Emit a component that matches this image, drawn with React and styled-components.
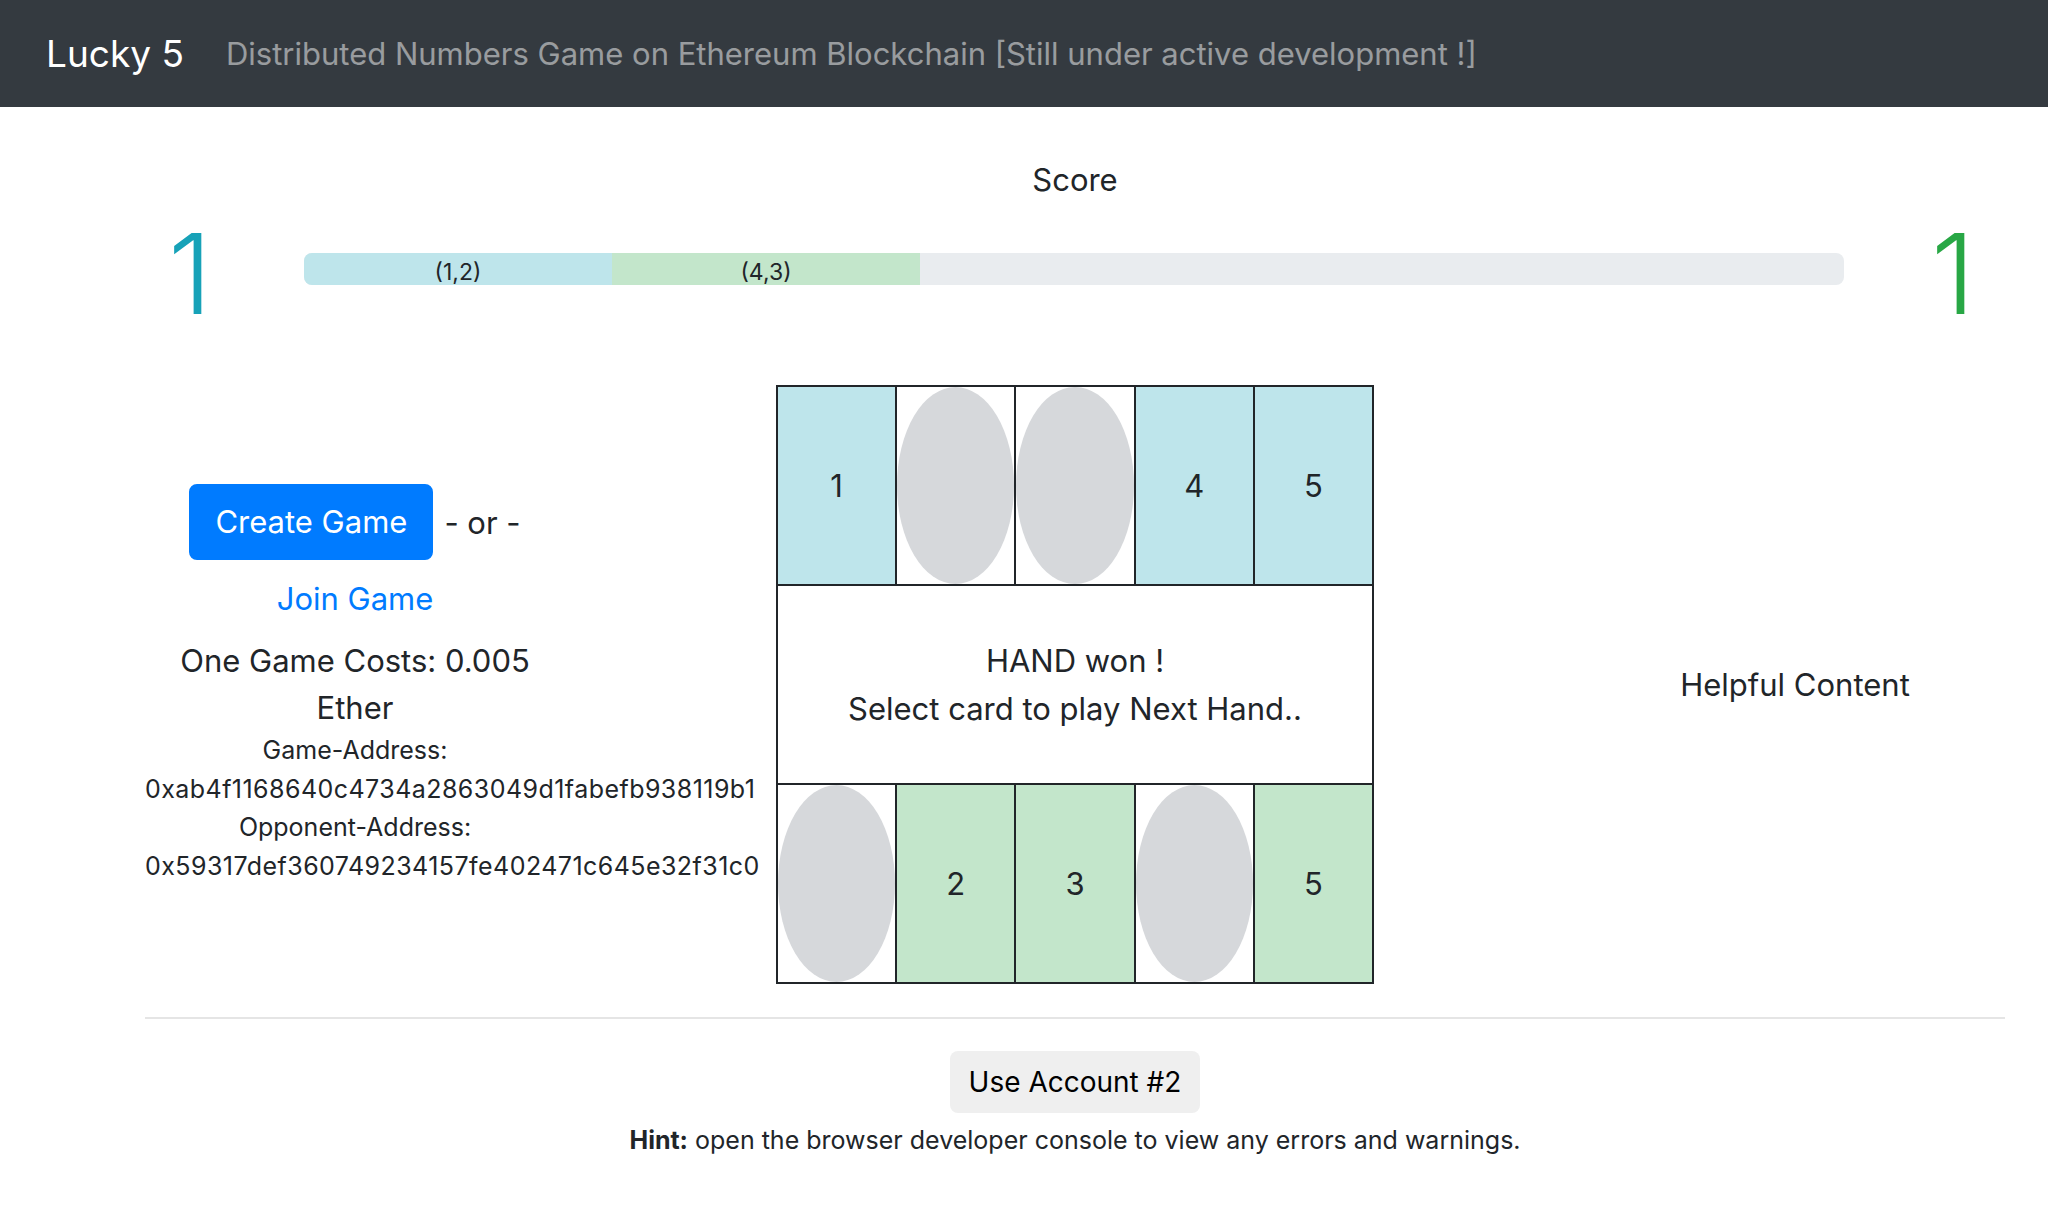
import React from "react";
import styled, {createGlobalStyle} from "styled-components";

const GlobalStyle = createGlobalStyle`
    body {
        margin: 0;
        font-family: Inter, "Noto Sans", "Liberation Sans", sans-serif;
        color: #212529;
        background: #fff;
    }
`

const NavBar = styled.nav`
    height: 107px;
    background-color: #343a40;
    display: flex;
    align-items: center;
    padding: 0 46px;
    gap: 42px;
`

const Brand = styled.span`
    font-size: 37px;
    color: #fff;
    white-space: nowrap;
`

const Tagline = styled.span`
    font-size: 31px;
    color: rgba(255, 255, 255, 0.5);
    white-space: nowrap;
`

const Main = styled.main`
    margin: 0 43px 0 145px;
`

const ScoreTitle = styled.div`
    margin-top: 49px;
    font-size: 31px;
    line-height: 48px;
    text-align: center;
`

const ScoreRow = styled.div`
    display: flex;
    align-items: flex-start;
    margin-top: 2px;
`

const BigScore = styled.div`
    width: ${props => props.$right ? "161px" : "159px"};
    box-sizing: border-box;
    font-size: 112px;
    font-weight: 300;
    line-height: 134px;
    text-align: ${props => props.$right ? "right" : "left"};
    padding: ${props => props.$right ? "0 30px 0 0" : "0 0 0 23px"};
    color: ${props => props.$right ? "#28a745" : "#17a2b8"};
`

const Progress = styled.div`
    flex: 1;
    display: flex;
    height: 32px;
    margin-top: 47px;
    border-radius: 8px;
    overflow: hidden;
    background-color: #e9ecef;
`

const ProgressSegment = styled.div`
    width: 20%;
    font-size: 23px;
    line-height: 32px;
    padding-top: 3px;
    box-sizing: border-box;
    text-align: center;
    background-color: ${props => props.$player ? "#c3e6cb" : "#bee5eb"};
`

const GameRow = styled.div`
    display: grid;
    grid-template-columns: 420px 1fr 420px;
    align-items: center;
    margin-top: 45px;
`

const SideColumn = styled.div`
    display: flex;
    flex-direction: column;
    text-align: center;
`

const ButtonLine = styled.div`
    display: flex;
    justify-content: center;
    align-items: center;
    gap: 11px;
    font-size: 31px;
`

const CreateButton = styled.button`
    font-family: inherit;
    font-size: 31px;
    line-height: 48px;
    padding: 12px 24px;
    color: #fff;
    background-color: #007bff;
    border: 2px solid #007bff;
    border-radius: 8px;
    cursor: pointer;
`

const JoinLink = styled.a`
    display: block;
    margin-top: 15px;
    font-size: 31px;
    line-height: 48px;
    color: #007bff;
    text-decoration: none;
`

const Costs = styled.div`
    margin-top: 14px;
    font-size: 31px;
    line-height: 47px;
`

const SmallLine = styled.div`
    font-size: 25px;
    line-height: 38.5px;
    white-space: nowrap;
    letter-spacing: ${props => props.$hex ? "0.45px" : "normal"};
`

const Board = styled.div`
    width: 598px;
    justify-self: center;
    display: grid;
    grid-template-columns: repeat(5, 1fr);
    grid-template-rows: repeat(3, 197px);
    gap: 2px;
    padding: 2px;
    box-sizing: border-box;
    background-color: #212529;
`

const Card = styled.div`
    display: flex;
    align-items: center;
    justify-content: center;
    font-size: 31px;
    background-color: ${props => props.$color || "#fff"};
`

const CardBack = styled.div`
    width: 100%;
    height: 100%;
    border-radius: 50%;
    background-color: #d6d8db;
`

const Message = styled.div`
    grid-column: 1 / -1;
    display: flex;
    flex-direction: column;
    align-items: center;
    justify-content: center;
    background-color: #fff;
    font-size: 31px;
    line-height: 48px;
`

const Helpful = styled.div`
    text-align: center;
    font-size: 31px;
    line-height: 48px;
`

const Divider = styled.hr`
    margin: 33px 0 0;
    border: 0;
    border-top: 2px solid rgba(0, 0, 0, 0.1);
`

const Footer = styled.div`
    display: flex;
    flex-direction: column;
    align-items: center;
`

const AccountButton = styled.button`
    margin-top: 32px;
    font-family: inherit;
    font-size: 28px;
    line-height: 38px;
    padding: 12px 19px;
    color: #000;
    background-color: #efefef;
    border: 0;
    border-radius: 8px;
`

const Hint = styled.div`
    margin-top: 8px;
    font-size: 25px;
    line-height: 38px;

    b {
        font-weight: 700;
    }
`

const BLUE = "#bee5eb";
const GREEN = "#c3e6cb";

const opponentCards = [1, null, null, 4, 5];
const playerCards = [null, 2, 3, null, 5];

const App = () => {
    return (
        <React.Fragment>
            <GlobalStyle/>
            <NavBar>
                <Brand>Lucky 5</Brand>
                <Tagline>Distributed Numbers Game on Ethereum Blockchain [Still under active development !]</Tagline>
            </NavBar>
            <Main>
                <ScoreTitle>Score</ScoreTitle>
                <ScoreRow>
                    <BigScore>1</BigScore>
                    <Progress>
                        <ProgressSegment>(1,2)</ProgressSegment>
                        <ProgressSegment $player>(4,3)</ProgressSegment>
                    </Progress>
                    <BigScore $right>1</BigScore>
                </ScoreRow>

                <GameRow>
                    <SideColumn>
                        <ButtonLine>
                            <CreateButton>Create Game</CreateButton>
                            <span>- or -</span>
                        </ButtonLine>
                        <JoinLink href="#">Join Game</JoinLink>
                        <Costs>One Game Costs: 0.005<br/>Ether</Costs>
                        <SmallLine>Game-Address:</SmallLine>
                        <SmallLine $hex>0xab4f1168640c4734a2863049d1fabefb938119b1</SmallLine>
                        <SmallLine>Opponent-Address:</SmallLine>
                        <SmallLine $hex>0x59317def360749234157fe402471c645e32f31c0</SmallLine>
                    </SideColumn>

                    <Board>
                        {opponentCards.map((card, i) => (
                            <Card key={"o" + i} $color={card ? BLUE : null}>
                                {card ? card : <CardBack/>}
                            </Card>
                        ))}
                        <Message>
                            <div>HAND won !</div>
                            <div>Select card to play Next Hand..</div>
                        </Message>
                        {playerCards.map((card, i) => (
                            <Card key={"p" + i} $color={card ? GREEN : null}>
                                {card ? card : <CardBack/>}
                            </Card>
                        ))}
                    </Board>

                    <Helpful>Helpful Content</Helpful>
                </GameRow>

                <Divider/>
                <Footer>
                    <AccountButton>Use Account #2</AccountButton>
                    <Hint><b>Hint:</b> open the browser developer console to view any errors and warnings.</Hint>
                </Footer>
            </Main>
        </React.Fragment>
    )
}

export default App;
